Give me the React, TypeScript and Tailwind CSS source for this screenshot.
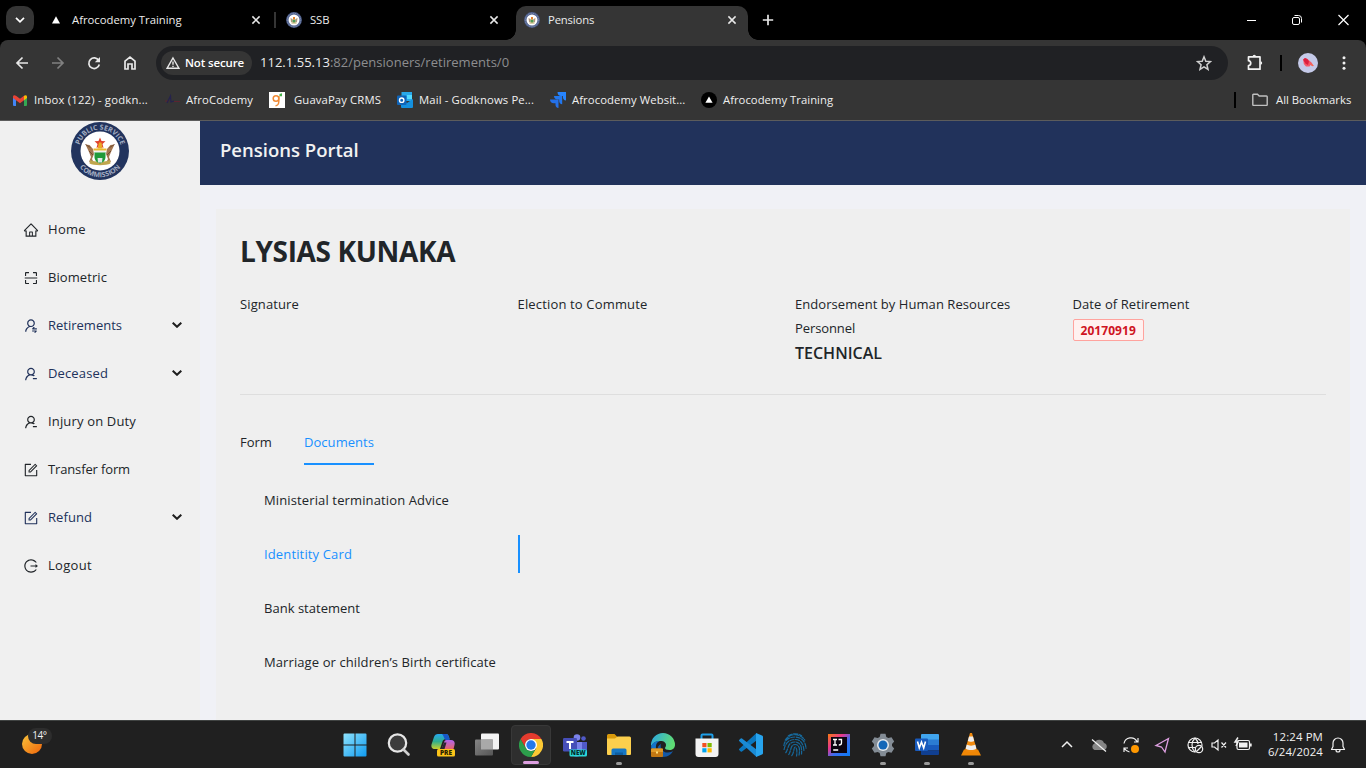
import type { ReactNode } from "react";
import {
  AiOutlineHome,
  AiOutlineScan,
  AiOutlineUserSwitch,
  AiOutlineUserDelete,
  AiOutlineForm,
  AiOutlineLogout,
} from "react-icons/ai";

type IconProps = { className?: string };

function Seal({ className = "" }: IconProps) {
  return (
    <svg viewBox="0 0 58 58" className={className}>
      <defs>
        <path id="sealTop" d="M7.700 29a21.300 21.300 0 0 1 42.600 0" />
        <path id="sealBottom" d="M2.800 29a26.200 26.200 0 0 0 52.400 0" />
      </defs>
      <circle cx="29" cy="29" r="29" fill="#22345e" />
      <circle cx="29" cy="29" r="19.500" fill="#fff" />
      <text fontSize="7" fontWeight="700" fill="#a3adc2" textAnchor="middle">
        <textPath href="#sealTop" startOffset="50%">PUBLIC SERVICE</textPath>
      </text>
      <text fontSize="7" fontWeight="700" fill="#a3adc2" textAnchor="middle">
        <textPath href="#sealBottom" startOffset="50%">COMMISSION</textPath>
      </text>
      <path d="M14.500 22.500l4 .5 3.500 4 1 5-2 5 1 2-4 1 2-5-2-5z" fill="#a37650" />
      <path d="M43.500 22.500l-4 .5-3.500 4-1 5 2 5-1 2 4 1-2-5 2-5z" fill="#a37650" />
      <path d="M14.500 22.500l5 3M43.500 22.500l-5 3M18 29l4 4M40 29l-4 4" stroke="#6b4a31" strokeWidth=".9" />
      <path d="M19 38c4 2 16 2 20 0l.5 3.500c-4 2.200-17 2.200-21 0z" fill="#c0a64e" />
      <path d="M23.500 30h11v5c0 3.500-2.500 5.500-5.500 6.500-3-1-5.500-3-5.500-6.500z" fill="#1f9a3a" />
      <path d="M26.500 36h5l-.5 4.500h-4z" fill="#dfe6e6" />
      <path d="M23.500 28.500h11v2h-11z" fill="#f0f0f0" />
      <path d="M22.500 26.500h13v2h-13z" fill="#e8b92c" />
      <path d="M29 15.500l1.500 3.500 4 .3-3 2.700 1 4-3.500-2-3.500 2 1-4-3-2.700 4-.3z" fill="#e0422c" />
      <path d="M28 20.500h2.500l1 6h-5z" fill="#eaa824" />
    </svg>
  );
}

function MiniSeal({ className = "" }: IconProps) {
  return (
    <svg viewBox="0 0 16 16" className={className}>
      <circle cx="8" cy="8" r="7.900" fill="#4d5f8c" />
      <circle cx="8" cy="8" r="6.700" fill="none" stroke="#8794b5" strokeWidth="1" strokeDasharray="1 .8" />
      <circle cx="8" cy="8" r="5.500" fill="#fff" />
      <path d="M4.500 6l2 1v3.500l-1.500-.5zM11.500 6l-2 1v3.500l1.500-.5z" fill="#b3977a" />
      <path d="M6.500 7.500h3V10L8 11 6.500 10z" fill="#4f9a55" />
      <path d="M7 5h2v2.500H7z" fill="#e2812f" />
      <path d="M5.500 10.500h5v1h-5z" fill="#b9a45a" />
    </svg>
  );
}

function Close({ className = "" }: IconProps) {
  return (
    <svg viewBox="0 0 10 10" className={"h-[10px] w-[10px] " + className} fill="none" stroke="#e8e8e8" strokeWidth="1.500">
      <path d="M1.400 1.400l7.200 7.200M8.600 1.400L1.400 8.600" />
    </svg>
  );
}

function Txt({ children, className = "" }: { children: ReactNode; className?: string }) {
  return <span className={"inline-block whitespace-nowrap " + className}>{children}</span>;
}

function TabStrip() {
  return (
    <div className="flex h-10 shrink-0 items-center bg-black text-[11.300px] text-[#ececec]">
      <div className="flex w-[46px] shrink-0 items-center pl-[6px]">
        <div className="flex size-7 items-center justify-center rounded-[10px] bg-[#353535]">
          <svg viewBox="0 0 10 6" className="h-[6px] w-[10px]" fill="none" stroke="#fff" strokeWidth="1.700">
            <path d="M1 .8l4 4 4-4" />
          </svg>
        </div>
      </div>
      <div className="flex w-[228px] items-center">
        <svg viewBox="0 0 20 16" className="h-4 w-5">
          <path d="M10 4.300l4 7.200H6z" fill="#fff" />
        </svg>
        <div className="ml-[6px] flex w-[179px]">
          <Txt>Afrocodemy Training</Txt>
        </div>
        <Close />
      </div>
      <div className="h-4 w-[2px] bg-[#353535]" />
      <div className="flex w-[240px] items-center pl-[10px]">
        <MiniSeal className="size-4" />
        <div className="ml-2 flex w-[179px]">
          <Txt className="tracking-[-0.100px]">SSB</Txt>
        </div>
        <Close />
      </div>
      <div className="relative flex h-[34px] w-[232px] items-center self-end rounded-t-[10px] bg-[#353535] pb-[6px] pl-2">
        <div className="absolute bottom-0 left-[-10px] h-[10px] w-[10px] bg-[radial-gradient(circle_at_top_left,transparent_9.500px,#353535_10px)]" />
        <div className="absolute right-[-10px] bottom-0 h-[10px] w-[10px] bg-[radial-gradient(circle_at_top_right,transparent_9.500px,#353535_10px)]" />
        <MiniSeal className="size-4" />
        <div className="ml-2 flex w-[179px]">
          <Txt className="tracking-[-0.150px]">Pensions</Txt>
        </div>
        <Close />
      </div>
      <svg viewBox="0 0 12 12" className="ml-[14px] size-3" stroke="#e8e8e8" strokeWidth="1.700">
        <path d="M6 .8v10.400M.8 6h10.400" />
      </svg>
      <svg viewBox="0 0 110 20" className="mr-[9px] ml-auto h-5 w-[110px]" fill="none" stroke="#fff">
        <path d="M-1 10.500h10" />
        <rect x="45.500" y="7.500" width="7" height="7" rx="1.500" />
        <path d="M47.500 5.500h4a3 3 0 0 1 3 3v4" />
        <path d="M91.500 5l10 10M101.500 5l-10 10" strokeWidth="1.200" />
      </svg>
    </div>
  );
}

function Toolbar() {
  return (
    <div className="flex h-[46px] shrink-0 bg-black">
      <div className="flex h-[46px] w-full items-center rounded-t-[8px] bg-[#353535] text-[#e8e8e8]">
        <svg viewBox="0 0 144 20" className="ml-[10px] h-5 w-[144px]" fill="none" strokeWidth="1.700">
          <path d="M18 10H7M12.500 4.500L7 10l5.500 5.500" stroke="#e8e8e8" />
          <path d="M42 10h11M47.500 4.500L53 10l-5.500 5.500" stroke="#808080" />
          <path d="M88.700 7.500a5.300 5.300 0 1 0 .6 4" stroke="#e8e8e8" />
          <path d="M90 4v5.200h-5.200z" fill="#e8e8e8" />
          <path d="M115 16V8.200l5-4 5 4V16h-3v-5h-4v5z" stroke="#e8e8e8" />
        </svg>
        <div className="ml-[2px] flex h-[34px] w-[1072px] items-center rounded-full bg-[#202124] pl-[5px]">
          <div className="flex h-6 w-[91px] items-center rounded-full bg-[#353535] pl-[5px]">
            <svg viewBox="0 0 14 14" className="size-[14px]" fill="none" stroke="#e8e8e8" strokeWidth="1.400">
              <path d="M7 2l6 10.300H1z" />
              <path d="M7 5.500v3.300M7 9.800v1.200" />
            </svg>
            <Txt className="ml-[5px] text-[11.500px] font-semibold tracking-[-0.140px] text-white">Not secure</Txt>
          </div>
          <div className="ml-2 flex flex-1 text-[13px] text-[#8d8e90]">
            <Txt className="tracking-[0.020px]">
              <span className="text-[#ececec]">112.1.55.13</span>:82/pensioners/retirements/0
            </Txt>
          </div>
          <svg viewBox="0 0 16 16" className="mr-4 size-4" fill="none" stroke="#d0d0d0" strokeWidth="1.500">
            <path d="M8 1.800l1.800 4.400 4.700.4-3.600 3.100 1.100 4.600L8 11.800l-4 2.500 1.100-4.600L1.500 6.600l4.700-.4z" />
          </svg>
        </div>
        <svg viewBox="0 0 20 20" className="ml-[17px] size-5" fill="none" stroke="#f2f2f2" strokeWidth="1.700">
          <path d="M3.500 3.900h11.500v12.300H3.500v-3.700c3 0 3-4.800 0-4.800z" strokeLinejoin="round" />
          <path d="M7.600 3.500a1.700 1.700 0 0 1 3.400 0zM15.500 8.300a1.700 1.700 0 0 1 0 3.400z" fill="#f2f2f2" stroke="none" />
        </svg>
        <div className="ml-[15px] h-4 w-[2px] bg-black" />
        <svg viewBox="0 0 20 20" className="ml-4 size-5">
          <circle cx="10" cy="10" r="10" fill="#c5cae9" />
          <path d="M5.200 6.500L7 5l2.500 1 4 3.500 2.300 3.500-1.300.300-2-1.300-1 1.500H8L5.800 11z" fill="#f4596a" />
          <path d="M5.200 6.500L7 5l2.300 1L11 8.500 10 12l-2.500-1.500L5.800 8z" fill="#dc2040" />
          <path d="M12 9.500l3.800 3.500-2-.3z" fill="#f5764a" />
        </svg>
        <svg viewBox="0 0 4 16" className="ml-6 h-4 w-1" fill="#f2f2f2">
          <circle cx="2" cy="2.700" r="1.500" />
          <circle cx="2" cy="8" r="1.500" />
          <circle cx="2" cy="13.300" r="1.500" />
        </svg>
      </div>
    </div>
  );
}

function Bookmarks() {
  return (
    <div className="flex h-[35px] shrink-0 items-center border-b border-[#5c5c5c] bg-[#353535] pb-[6px] text-[11.300px] text-[#f0f0f0]">
      <div className="flex w-[155px] items-center pl-[13px]">
        <svg viewBox="0 0 14 11" className="h-[11px] w-[14px]">
          <path d="M0 1.500L3 4v7H1a1 1 0 0 1-1-1z" fill="#4285f4" />
          <path d="M14 1.500L11 4v7h2a1 1 0 0 0 1-1z" fill="#34a853" />
          <path d="M0 2C0 0 1.500-.3 3 .8l4 3 4-3v4.400l-4 3-4-3L0 3z" fill="#ea4335" />
          <path d="M11 .8c1.500-1.100 3-.8 3 1.200v1l-3 2.200z" fill="#fbbc04" />
        </svg>
        <Txt className="ml-[7px] tracking-[0.190px]">Inbox (122) - godkn...</Txt>
      </div>
      <div className="flex w-[114px] items-center pl-[10px]">
        <svg viewBox="0 0 16 16" className="size-4" fill="none" strokeWidth="1.200">
          <path d="M0 9h4M9 9.500h6" stroke="#5c2430" />
          <path d="M2 11l3.500-7 .5 6 3-1" stroke="#25224e" />
        </svg>
        <Txt className="ml-[5px] tracking-[0.140px]">AfroCodemy</Txt>
      </div>
      <div className="flex w-[128px] items-center">
        <svg viewBox="0 0 16 16" className="size-4">
          <path d="M0 0h16v16H0z" fill="#fff" />
          <circle cx="7" cy="6.500" r="2.800" fill="none" stroke="#f08a35" strokeWidth="1.500" />
          <path d="M9.800 4v5.500c0 2.500-1.500 4.300-3.300 4.300" fill="none" stroke="#f08a35" strokeWidth="1.500" />
          <path d="M10.500 2l2.500-.8v3h-2.500z" fill="#43b047" />
        </svg>
        <Txt className="ml-[9px] tracking-[0.120px]">GuavaPay CRMS</Txt>
      </div>
      <div className="flex w-[153px] items-center">
        <svg viewBox="0 0 16 16" className="size-4">
          <path d="M4.500 0H15v9H4.500z" fill="#28a8ea" />
          <path d="M10 3h5v4h-5z" fill="#50d9ff" />
          <path d="M4 7l6 4 6-4v8a1 1 0 0 1-1 1H5a1 1 0 0 1-1-1z" fill="#1490df" />
          <rect y="3.500" width="9.500" height="9.500" rx="1" fill="#0f64b8" />
          <circle cx="4.700" cy="8.200" r="2.200" fill="none" stroke="#fff" strokeWidth="1.400" />
        </svg>
        <Txt className="ml-[6px] tracking-[0.130px]">Mail - Godknows Pe...</Txt>
      </div>
      <div className="flex w-[151px] items-center">
        <svg viewBox="0 0 16 16" className="size-4">
          <path d="M7.500 0H16v8.500c-2 0-3-1.500-3-3V4h-2c-2 0-3.500-1.500-3.500-4z" fill="#2684ff" />
          <path d="M4 4h8.200v8.200c-2 0-3-1.500-3-3V7.500H7.500C5.500 7.500 4 6 4 4z" fill="#2277ee" />
          <path d="M0 7.500h8.500V16c-2 0-3-1.500-3-3v-1.700H3.800C1.500 11.300 0 9.500 0 7.500z" fill="#2470e8" />
        </svg>
        <Txt className="ml-[6px] tracking-[0.080px]">Afrocodemy Websit...</Txt>
      </div>
      <svg viewBox="0 0 16 16" className="size-4">
        <circle cx="8" cy="8" r="8" fill="#000" />
        <path d="M8 4.500l3.600 6.300H4.400z" fill="#fff" />
      </svg>
      <Txt className="ml-[6px] tracking-[0.020px]">Afrocodemy Training</Txt>
      <div className="mr-[14px] ml-auto flex items-center">
        <div className="h-4 w-[2px] bg-black" />
        <svg viewBox="0 0 16 14" className="ml-4 h-[14px] w-4" fill="none" stroke="#c0c0c0" strokeWidth="1.400">
          <path d="M.8 2a.7.7 0 0 1 .7-.8h4l1.700 1.800h7.300a.7.7 0 0 1 .7.700v8a.7.7 0 0 1-.7.700h-13a.7.7 0 0 1-.7-.7z" />
        </svg>
        <Txt className="ml-2 w-[76px]">All Bookmarks</Txt>
      </div>
    </div>
  );
}

const menu = [
  { label: "Home", icon: AiOutlineHome, track: "tracking-[0.310px]", group: false },
  { label: "Biometric", icon: AiOutlineScan, track: "tracking-[0.080px]", group: false },
  { label: "Retirements", icon: AiOutlineUserSwitch, track: "tracking-[0px]", group: true },
  { label: "Deceased", icon: AiOutlineUserDelete, track: "tracking-[0.130px]", group: true },
  { label: "Injury on Duty", icon: AiOutlineUserDelete, track: "tracking-[0.160px]", group: false },
  { label: "Transfer form", icon: AiOutlineForm, track: "tracking-[-0.140px]", group: false },
  { label: "Refund", icon: AiOutlineForm, track: "tracking-[0.060px]", group: true },
  { label: "Logout", icon: AiOutlineLogout, track: "tracking-[0.320px]", group: false },
];

function Sidebar() {
  return (
    <aside className="flex w-[200px] shrink-0 flex-col bg-[#f0f0f0]">
      <Seal className="mt-px ml-[71px] size-[58px]" />
      <nav className="mt-[25px] flex flex-col text-[13px]">
        {menu.map((m) => (
          <div
            key={m.label}
            className={"flex h-12 items-center pt-px pr-[18px] pl-[23px] " + (m.group ? "text-[#21325b]" : "text-[#212529]")}
          >
            <m.icon className="size-4" />
            <Txt className={"ml-[9px] " + m.track}>{m.label}</Txt>
            {m.group && (
              <svg viewBox="0 0 10 6" className="mb-[2px] ml-auto h-[6px] w-[10px]" fill="none" stroke="#1e1e1e" strokeWidth="2">
                <path d="M.7.700L5 4.800 9.300.7" />
              </svg>
            )}
          </div>
        ))}
      </nav>
    </aside>
  );
}

const documents = [
  { label: "Ministerial termination Advice", track: "tracking-[0.128px]", active: false },
  { label: "Identitity Card", track: "tracking-[0.141px]", active: true },
  { label: "Bank statement", track: "tracking-[0.020px]", active: false },
  { label: "Marriage or children’s Birth certificate", track: "tracking-[0.096px]", active: false },
];

function Portal() {
  return (
    <div className="flex min-w-0 flex-1 flex-col bg-[#f0f1f6]">
      <header className="h-16 shrink-0 bg-[#21325b] pt-[14px] pl-5 text-[18.500px] leading-[30px] font-semibold text-[#f2f2f2]">
        <Txt>Pensions Portal</Txt>
      </header>
      <main className="mx-4 mt-6 flex-1 bg-[#efefef] px-6 pt-[22px] text-[13px] text-[#212529]">
        <h1 className="text-[28px] leading-10 font-bold">
          <Txt className="tracking-[-0.350px]">LYSIAS KUNAKA</Txt>
        </h1>
        <div className="mt-[21px] grid h-[103px] grid-cols-4 gap-x-6 border-b border-[#dedede] leading-6">
          <div>
            <Txt className="tracking-[0.120px]">Signature</Txt>
          </div>
          <div>
            <Txt className="tracking-[0.160px]">Election to Commute</Txt>
          </div>
          <div className="flex flex-col items-start">
            <Txt className="tracking-[0.060px]">Endorsement by Human Resources</Txt>
            <Txt className="tracking-[-0.100px]">Personnel</Txt>
            <Txt className="mt-px text-[16px] font-semibold">TECHNICAL</Txt>
          </div>
          <div className="flex flex-col items-start">
            <Txt className="tracking-[0.090px]">Date of Retirement</Txt>
            <div className="mt-[3px] h-[22px] w-[71px] rounded-[2px] border border-[#ffa39e] bg-[#fff1f0] pl-[7px] text-[12px] leading-[21px] font-bold text-[#cf1322]">
              <Txt className="tracking-[0.050px]">20170919</Txt>
            </div>
          </div>
        </div>
        <div className="mt-[24px] flex gap-8 leading-[46px]">
          <Txt className="h-[46px] w-8">Form</Txt>
          <div className="h-[46px] w-[70px] border-b-2 border-[#1890ff] font-medium text-[#1890ff]">
            <Txt className="tracking-[0.045px]">Documents</Txt>
          </div>
        </div>
        <div className="mt-4 flex w-[280px] flex-col gap-4">
          {documents.map((d) => (
            <div
              key={d.label}
              className={
                "flex h-[38px] items-center pt-[2px] pl-6 " +
                (d.active ? "border-r-2 border-[#1890ff] font-medium text-[#1890ff]" : "")
              }
            >
              <Txt className={d.track}>{d.label}</Txt>
            </div>
          ))}
        </div>
      </main>
    </div>
  );
}

function WindowsIcon() {
  return (
    <svg viewBox="0 0 24 24" className="size-6">
      <linearGradient id="win" x1="0" y1="0" x2="1" y2="1">
        <stop stopColor="#8fe3fd" />
        <stop offset="1" stopColor="#0f9bf0" />
      </linearGradient>
      <path d="M.5 1.500a1 1 0 0 1 1-1h10v11h-11zM12.500.5h10a1 1 0 0 1 1 1v10h-11zM.5 12.500h11v11h-10a1 1 0 0 1-1-1zM12.500 12.500h11v10a1 1 0 0 1-1 1h-10z" fill="url(#win)" />
    </svg>
  );
}

function SearchIcon() {
  return (
    <svg viewBox="0 0 24 24" className="size-6" fill="none">
      <circle cx="10.500" cy="10" r="8.700" fill="#3c3c3c" stroke="#e6e6e6" strokeWidth="2.200" />
      <path d="M16.500 16.500l5 5" stroke="#d0d0d0" strokeWidth="2.600" strokeLinecap="round" />
    </svg>
  );
}

function CopilotIcon() {
  return (
    <svg viewBox="0 0 24 24" className="size-6">
      <linearGradient id="cpA" x1="0" y1="0" x2="0" y2="1">
        <stop stopColor="#27a8f0" />
        <stop offset=".5" stopColor="#2fae8e" />
        <stop offset="1" stopColor="#c8d02c" />
      </linearGradient>
      <linearGradient id="cpB" x1="0" y1="0" x2="0" y2="1">
        <stop stopColor="#b065f0" />
        <stop offset="1" stopColor="#f0644c" />
      </linearGradient>
      <path d="M7 1h8c2 0 2.500 1.500 3 3l.5 2H15c-2 0-3 1-3.500 2.500L9 16H4c-3 0-4-2-3.500-4.500L3 4c.7-2 2-3 4-3z" fill="url(#cpA)" />
      <path d="M11 1h4c2 0 2.500 1.500 3 3l.8 3H15c-2-.3-2-4.500-4-6z" fill="#1857c8" />
      <path d="M15.500 7H20c3 0 4.200 2 3.500 5L22 18H10l3-8.500c.4-1.500 1-2.500 2.500-2.500z" fill="url(#cpB)" />
      <path d="M13 9.500l2.500 0-2 6.500h-3z" fill="#2a2530" />
      <rect x="6" y="16" width="18" height="7.500" rx="1.500" fill="#fcc419" />
      <text x="15" y="22.200" fontSize="6.500" fontWeight="800" textAnchor="middle" fill="#2b2100">PRE</text>
    </svg>
  );
}

function TaskViewIcon() {
  return (
    <svg viewBox="0 0 24 24" className="size-6">
      <linearGradient id="tv" x1="0" y1="0" x2="1" y2="1">
        <stop stopColor="#858585" />
        <stop offset="1" stopColor="#555" />
      </linearGradient>
      <rect x="6" y=".5" width="18" height="16" rx="1" fill="#f3f3f3" />
      <rect x="0" y="6.500" width="18" height="16" rx="1" fill="url(#tv)" />
      <path d="M6 6.500h12v10H6z" fill="#a9a9a9" />
    </svg>
  );
}

function ChromeIcon() {
  return (
    <svg viewBox="0 0 24 24" className="size-6">
      <path d="M12 6h10.400A12 12 0 0 1 12 24l5.200-9z" fill="#fcc934" />
      <path d="M1.600 6L6.800 15a6 6 0 0 0 10.400 0L12 24A12 12 0 0 1 1.600 6z" fill="#2c9e4b" />
      <path d="M1.600 6A12 12 0 0 1 22.400 6H12a6 6 0 0 0-5.200 9z" fill="#e33b2e" />
      <circle cx="12" cy="12" r="6" fill="#fff" />
      <circle cx="12" cy="12" r="4.700" fill="#2378ea" />
    </svg>
  );
}

function TeamsIcon() {
  return (
    <svg viewBox="0 0 24 24" className="size-6">
      <circle cx="14" cy="4.500" r="3.300" fill="#7b83eb" />
      <circle cx="20.500" cy="5.500" r="2.300" fill="#5059c9" />
      <path d="M17 9h7v8a4 4 0 0 1-7 2z" fill="#5059c9" />
      <path d="M8 9h11v9a5.500 5.500 0 0 1-11 0z" fill="#7b83eb" />
      <rect x="0" y="5" width="14" height="13.500" rx="1.200" fill="#464eb8" />
      <path d="M3.500 8h7v2H8v6H6v-6H3.500z" fill="#fff" />
      <rect x="6.500" y="16.500" width="17.500" height="7" rx="1.500" fill="#2ad9d9" />
      <text x="15.300" y="22.200" fontSize="6.200" fontWeight="800" textAnchor="middle" fill="#05292c">NEW</text>
    </svg>
  );
}

function FolderIcon() {
  return (
    <svg viewBox="0 0 24 24" className="size-6">
      <path d="M0 2.500A1.500 1.500 0 0 1 1.500 1h6L10 3.500V8H0z" fill="#d99a0b" />
      <path d="M0 5.500h8l2.500-2H22.500A1.500 1.500 0 0 1 24 5v16a1 1 0 0 1-1 1H1a1 1 0 0 1-1-1z" fill="#fccf4d" />
      <path d="M4.500 22v-5a1.500 1.500 0 0 1 1.500-1.500h12a1.500 1.500 0 0 1 1.500 1.500v5z" fill="#1777c4" />
      <path d="M8 22v-2.500h8V22z" fill="#0f5d9e" />
    </svg>
  );
}

function EdgeIcon() {
  return (
    <svg viewBox="0 0 24 24" className="size-6">
      <linearGradient id="edg" x1="0" y1="0" x2="1" y2=".3">
        <stop stopColor="#2aa6e8" />
        <stop offset="1" stopColor="#5fdc74" />
      </linearGradient>
      <path d="M0 12A12 12 0 0 1 24 12c0 3-2.500 5-5.500 5-3 0-4.500-1-4.500-2 0-1 1-1 1-3 0-2.500-2.500-4-5-4C5 8 1 10 0 14z" fill="url(#edg)" />
      <path d="M0 14c1-4 4.500-6.500 9-6-3 1-4.500 3.500-4 7 .7 4.500 4 8 9 8.500A12 12 0 0 1 0 14z" fill="#1374c9" />
      <path d="M10 11c-1.500 4 2 9 7 8.500 2.300-.2 4-.8 5-1.500-2 4-6 6.300-10.500 5.800C5 22 5 13 10 11z" fill="#1458a6" />
      <rect x="0" y="15.500" width="12" height="8.500" rx="1" fill="#c27712" />
      <path d="M0 16.500a1 1 0 0 1 1-1h10a1 1 0 0 1 1 1V19H0z" fill="#e09a28" />
      <path d="M5 18.500h2v2H5z" fill="#ffe07a" />
    </svg>
  );
}

function StoreIcon() {
  return (
    <svg viewBox="0 0 24 24" className="size-6">
      <path d="M6.500 6V2.500a1 1 0 0 1 1-1h9a1 1 0 0 1 1 1V6" fill="none" stroke="#1ea0ea" strokeWidth="2" />
      <path d="M.5 5.500h23V21a3 3 0 0 1-3 3h-17a3 3 0 0 1-3-3z" fill="#f3f3f3" />
      <path d="M7.300 10h4.200v4.200H7.300z" fill="#f25022" />
      <path d="M12.500 10h4.200v4.200h-4.200z" fill="#7fba00" />
      <path d="M7.300 15.200h4.200v4.200H7.300z" fill="#00a4ef" />
      <path d="M12.500 15.200h4.200v4.200h-4.200z" fill="#ffb900" />
    </svg>
  );
}

function CodeIcon() {
  return (
    <svg viewBox="0 0 24 24" className="size-6">
      <path d="M17.500 0v7.500L3 18.500a1 1 0 0 1-1.300 0L.4 17.200a1 1 0 0 1 0-1.500z" fill="#0a77bf" />
      <path d="M17.500 24v-7.500L3 5.500a1 1 0 0 0-1.300 0L.4 6.800a1 1 0 0 0 0 1.500z" fill="#1a8ad4" />
      <path d="M17 0l6 2.500a1.500 1.500 0 0 1 1 1.500v16a1.500 1.500 0 0 1-1 1.500L17 24z" fill="#27a4ee" />
    </svg>
  );
}

function FingerprintIcon() {
  return (
    <svg viewBox="0 0 24 24" className="size-6" fill="none" stroke="#16699c" strokeWidth="1.200" strokeDasharray="5 .6">
      <path d="M5 3A12 12 0 0 1 19 3M2 7.500A11.500 11.500 0 0 1 22 7.500M.8 13C1 8 5 4 12 4s11 5 11 12" />
      <path d="M1 17C2 10 6 6.500 12 6.500S20.500 11 21 18M2.500 20C6 16 4 9 12 9c6 0 7 5 6.500 12.500M5.500 22c3-4 1.500-10.500 6.500-10.500S17 17 16 22.500M8.500 23c3-3 2-9 3.500-9s2.500 4 1.500 9.500" />
    </svg>
  );
}

function IntellijIcon() {
  return (
    <svg viewBox="0 0 24 24" className="size-6">
      <linearGradient id="ij" x1="0" y1="0" x2="1" y2="1">
        <stop stopColor="#f97a12" />
        <stop offset=".35" stopColor="#e8368f" />
        <stop offset=".6" stopColor="#3a6df0" />
        <stop offset="1" stopColor="#0a7bf5" />
      </linearGradient>
      <rect x="1" y="1" width="22" height="22" fill="url(#ij)" />
      <rect x="4" y="4" width="16" height="16" fill="#0c0410" />
      <path d="M6 6.500h4M6 12h4M8 6.500V12M11.500 6.500h3V10c0 1.500-.8 2-2.700 2M6.200 17h5" stroke="#fff" strokeWidth="1.300" fill="none" />
    </svg>
  );
}

function GearIcon() {
  return (
    <svg viewBox="0 0 24 24" className="size-6">
      <path d="M9.500.8h5l.8 3.200 2 1.100 3.200-.9 2.700 4.300L21 11v2l2.200 2.500-2.700 4.300-3.200-.9-2 1.100-.8 3.200h-5L8.700 20l-2-1.100-3.200.9L.8 15.500 3 13v-2L.8 8.500l2.700-4.300 3.200.9 2-1.100z" fill="#838c95" />
      <circle cx="12" cy="12" r="6" fill="#e4e8ec" />
      <circle cx="12" cy="12" r="4.500" fill="#1467b8" />
    </svg>
  );
}

function WordIcon() {
  return (
    <svg viewBox="0 0 24 24" className="size-6">
      <path d="M6 2a1 1 0 0 1 1-1h16a1 1 0 0 1 1 1v5H6z" fill="#41a5ee" />
      <path d="M6 6.500h18V12H6z" fill="#2b7cd3" />
      <path d="M6 12h18v5.500H6z" fill="#185abd" />
      <path d="M6 17.500h18V21a1 1 0 0 1-1 1H7a1 1 0 0 1-1-1z" fill="#103f91" />
      <rect x="0" y="5.500" width="13" height="12.500" rx="1" fill="#185abd" />
      <path d="M2.500 8.500L4.300 15l2.200-6 2.200 6 1.800-6.500" fill="none" stroke="#fff" strokeWidth="1.600" />
    </svg>
  );
}

function VlcIcon() {
  return (
    <svg viewBox="0 0 24 24" className="size-6">
      <path d="M5 16.500h14l3 6H2z" fill="#f08705" />
      <path d="M11 0h2l5 17.500c-2 2-10 2-12 0z" fill="#f28a0c" />
      <path d="M10 3.500h4l1.200 4.500c-1.300 1-5 1-6.400 0zM7.800 11.500c2 1.500 6.500 1.500 8.400 0l1.200 4c-2.700 2-8 2-10.800 0z" fill="#eee" />
    </svg>
  );
}

const apps: { id: string; icon: () => ReactNode; open?: boolean; active?: boolean }[] = [
  { id: "start", icon: WindowsIcon },
  { id: "search", icon: SearchIcon },
  { id: "copilot", icon: CopilotIcon },
  { id: "views", icon: TaskViewIcon },
  { id: "chrome", icon: ChromeIcon, active: true },
  { id: "teams", icon: TeamsIcon },
  { id: "files", icon: FolderIcon, open: true },
  { id: "edge", icon: EdgeIcon },
  { id: "store", icon: StoreIcon },
  { id: "code", icon: CodeIcon },
  { id: "fingerprint", icon: FingerprintIcon },
  { id: "idea", icon: IntellijIcon },
  { id: "settings", icon: GearIcon, open: true },
  { id: "word", icon: WordIcon, open: true },
  { id: "vlc", icon: VlcIcon, open: true },
];

function Taskbar() {
  return (
    <footer className="flex h-12 shrink-0 items-center border-t border-[#404342] bg-[#202020] text-[#f2f2f2]">
      <div className="flex w-[333px] shrink-0 pl-[20px]">
        <div className="relative">
          <svg viewBox="0 0 24 24" className="size-6">
            <linearGradient id="moon" x1="0" y1="0" x2="1" y2="1">
              <stop stopColor="#f8c53c" />
              <stop offset="1" stopColor="#f0640a" />
            </linearGradient>
            <circle cx="12" cy="11" r="10" fill="url(#moon)" />
          </svg>
          <div className="absolute top-[-5px] left-[8px] flex h-4 w-6 items-center justify-center rounded-full bg-[#2d2d2d] pr-px text-[10px]">
            <Txt className="tracking-[-0.400px]">14°</Txt>
          </div>
        </div>
      </div>
      {apps.map((a) => (
        <div key={a.id} className="flex w-11 shrink-0 justify-center">
          <div
            className={
              "relative flex h-10 w-10 items-center justify-center rounded-[4px] " +
              (a.active ? "border border-[#383838] bg-[#2e2e2e]" : "")
            }
          >
            <a.icon />
            {a.open && <div className="absolute bottom-0 h-[3px] w-[6px] rounded-full bg-[#9a9a9a]" />}
            {a.active && <div className="absolute bottom-0 h-[3px] w-4 rounded-full bg-[#dd9fe0]" />}
          </div>
        </div>
      ))}
      <svg viewBox="0 0 200 20" className="ml-[63px] h-5 w-[200px] shrink-0" fill="none" stroke="#f0f0f0" strokeWidth="1.200">
        <path d="M6 12L11 7l5 5" strokeWidth="1.500" />
        <path d="M38.500 15a3.500 3.500 0 0 1 0-6.500 5 5 0 0 1 9.500-.5 3.600 3.600 0 0 1 0 7z" fill="#858585" stroke="none" />
        <path d="M36 4.500l14 12" />
        <path d="M68 8.500a7 7 0 0 1 13-2M82 3v4h-4M68 17v-4h4M68.500 13.500a7 7 0 0 0 5 3.500" />
        <circle cx="79" cy="14" r="4" fill="#ff9800" stroke="none" />
        <path d="M112.500 3.500L100 10.500l5.500 1.500 3.500 5z" stroke="#dd9fe0" strokeWidth="1.300" />
        <circle cx="139" cy="10" r="7" />
        <path d="M132 7.500h14M132 12.500h8M139 3c-4 4-4 10 0 14M139 3c2 2 3 4 3 6" />
        <circle cx="143" cy="14" r="3.700" fill="#202020" />
        <path d="M140.500 16.500l5-5" />
        <path d="M156 8h2.500l3.500-3v10l-3.500-3H156zM165.500 7.500l4.500 5M170 7.500l-4.500 5" />
        <rect x="181" y="5.500" width="12.500" height="9" rx="1.500" />
        <path d="M183 7.500h8.500v5H183z" fill="#f0f0f0" stroke="none" />
        <path d="M194.800 8.500v3" strokeWidth="1.800" />
        <path d="M182 2.500l-3 4.500h3l-2 4" strokeWidth="1.500" />
      </svg>
      <div className="mb-px ml-auto flex w-[60px] shrink-0 flex-col items-end text-[11.400px] leading-[15px]">
        <Txt className="tracking-[0.130px]">12:24 PM</Txt>
        <Txt className="tracking-[0.130px]">6/24/2024</Txt>
      </div>
      <svg viewBox="0 0 16 16" className="mr-5 ml-[7px] size-4 shrink-0" fill="none" stroke="#f0f0f0" strokeWidth="1.200">
        <path d="M1.500 12.500l1.500-3V6a5 5 0 0 1 10 0v3.500l1.500 3zM6 13a2 2 0 0 0 4 0" strokeLinejoin="round" />
      </svg>
    </footer>
  );
}

export default function App() {
  return (
    <div className="flex h-screen w-screen flex-col overflow-hidden font-['Open_Sans','Noto_Sans',sans-serif]">
      <TabStrip />
      <Toolbar />
      <Bookmarks />
      <div className="flex min-h-0 flex-1">
        <Sidebar />
        <Portal />
      </div>
      <Taskbar />
    </div>
  );
}
